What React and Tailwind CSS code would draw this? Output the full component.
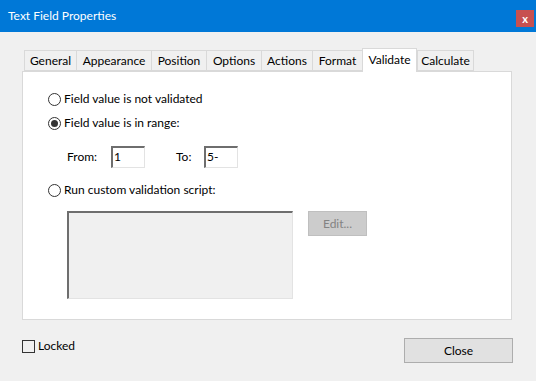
const tabs = [
  { label: 'General', w: 'w-[52px]' },
  { label: 'Appearance', w: 'w-[75px]' },
  { label: 'Position', w: 'w-[55px]' },
  { label: 'Options', w: 'w-[55px]' },
  { label: 'Actions', w: 'w-[51px]' },
  { label: 'Format', w: 'w-[50px]' },
  { label: 'Validate', w: 'w-[55px]', active: true },
  { label: 'Calculate', w: 'w-[57px]' },
];

function Radio({ checked, children }) {
  return (
    <div className="flex items-center h-[16px]">
      <span className="w-[13px] h-[13px] rounded-full border border-[#333] bg-white flex items-center justify-center">
        {checked && <span className="w-[7px] h-[7px] rounded-full bg-[#333]" />}
      </span>
      <span className="ml-[3px]">{children}</span>
    </div>
  );
}

function Field({ value }) {
  return (
    <div className="w-[34px] h-[22px] bg-white border-t-2 border-l-2 border-[#6e6e6e] border-r border-b border-r-[#e3e3e3] border-b-[#e3e3e3] pl-[1px] leading-[18px]">
      {value}
    </div>
  );
}

export default function App() {
  return (
    <div className="w-[536px] h-[381px] bg-[#f0f0f0] text-black text-[12px] font-['Lato',sans-serif] flex flex-col overflow-hidden">
      <div className="h-[32px] bg-[#0078d7] flex items-center justify-between pl-[8px] pr-[2px]">
        <span className="text-white text-[12px]">Text Field Properties</span>
        <span className="w-[18px] h-[17px] bg-[#c75050] text-white text-[11px] font-bold flex items-center justify-center leading-none mt-[4px]">
          x
        </span>
      </div>

      <div className="px-[22px] pt-[16px]">
        <div className="flex items-end pl-[2px] h-[23px]">
          {tabs.map((t) =>
            t.active ? (
              <div
                key={t.label}
                className={`${t.w} h-[24px] bg-white border border-b-0 border-[#d9d9d9] flex items-start justify-center pt-[2px] -mb-[1px] relative z-10`}
              >
                {t.label}
              </div>
            ) : (
              <div
                key={t.label}
                className={`${t.w} h-[21px] bg-[#f0f0f0] border border-r-0 border-[#d9d9d9] flex items-center justify-center last:border-r`}
              >
                {t.label}
              </div>
            )
          )}
        </div>

        <div className="w-[490px] h-[249px] bg-white border border-[#d9d9d9] pl-[25px] pt-[19px]">
          <div className="flex flex-col gap-[8px]">
            <Radio>Field value is not validated</Radio>
            <Radio checked>Field value is in range:</Radio>
          </div>
          <div className="flex items-center mt-[15px] ml-[19px]">
            <span className="w-[44px]">From:</span>
            <Field value="1" />
            <span className="ml-[31px] w-[28px]">To:</span>
            <Field value="5-" />
          </div>
          <div className="mt-[14px]">
            <Radio>Run custom validation script:</Radio>
          </div>
          <div className="flex items-start mt-[13px] ml-[19px]">
            <div className="w-[226px] h-[88px] bg-[#f0f0f0] border-t-2 border-l-2 border-[#6e6e6e] border-r border-b border-r-[#e3e3e3] border-b-[#e3e3e3]" />
            <div className="ml-[15px] w-[59px] h-[25px] bg-[#cccccc] border border-[#bfbfbf] text-[#838383] flex items-center justify-center">
              Edit...
            </div>
          </div>
        </div>

        <div className="flex items-start justify-between mt-[19px]">
          <div className="flex items-center mt-[-2px]">
            <span className="w-[13px] h-[13px] border border-[#333] bg-[#f0f0f0]" />
            <span className="ml-[3px]">Locked</span>
          </div>
          <div className="w-[109px] h-[25px] bg-[#e1e1e1] border border-[#adadad] flex items-center justify-center mr-[1px] mt-[-1px]">
            Close
          </div>
        </div>
      </div>
    </div>
  );
}
